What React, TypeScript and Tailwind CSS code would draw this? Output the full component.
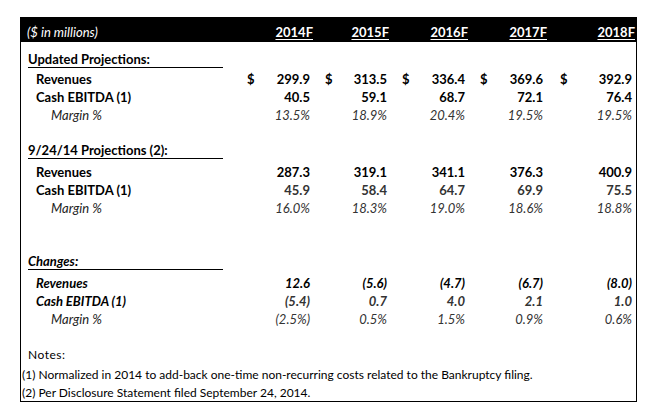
import React from 'react';

type Row = {
  label: string;
  values: string[];
  dollar?: boolean;
  kind: 'main' | 'margin';
  tone?: string;
};

const cols = ['2014F', '2015F', '2016F', '2017F', '2018F'];

// column widths and $ offsets, measured off the sheet
const colW = ['w-[69px]', 'w-[78px]', 'w-[78px]', 'w-[78px]', 'w-[89px]'];
const dollarPad = ['pl-[3px]', 'pl-[12px]', 'pl-[11px]', 'pl-[11px]', 'pl-[13px]'];
const valPad = ['pr-[3px]', 'pr-[4px]', 'pr-[4px]', 'pr-[4px]', 'pr-[4px]'];
const headPad = ['pr-[0px]', 'pr-[2px]', 'pr-[1px]', 'pr-[0px]', 'pr-[1px]'];

function DataRow({ row, italic }: { row: Row; italic?: boolean }) {
  const isMargin = row.kind === 'margin';
  return (
    <div className="flex h-[18px] items-center leading-[18px]">
      <div
        className={
          'w-[223px] ' +
          (isMargin ? 'pl-[30px] italic font-normal text-[#222]' : 'pl-[15px] font-bold') +
          (italic && !isMargin ? ' italic' : '')
        }
      >
        {row.label}
      </div>
      {row.values.map((v, i) => (
        <div key={i} className={'flex justify-between ' + colW[i] + ' ' + dollarPad[i] + ' ' + valPad[i]}>
          <span className="font-bold">{row.dollar ? '$' : ''}</span>
          <span
            className={
              isMargin
                ? 'italic text-[#333]'
                : 'font-bold ' + (italic ? 'italic ' : '') + (row.tone ?? 'text-black')
            }
          >
            {v}
          </span>
        </div>
      ))}
    </div>
  );
}

function Title({ text, italic }: { text: string; italic?: boolean }) {
  return (
    <div className="flex h-[17px]">
      <div className={'ml-[7px] w-[195px] border-b border-black font-bold leading-[16px] ' + (italic ? 'italic' : '')}>
        {text}
      </div>
    </div>
  );
}

export default function App() {
  const updated: Row[] = [
    { label: 'Revenues', values: ['299.9', '313.5', '336.4', '369.6', '392.9'], dollar: true, kind: 'main' },
    { label: 'Cash EBITDA (1)', values: ['40.5', '59.1', '68.7', '72.1', '76.4'], kind: 'main' },
    { label: 'Margin %', values: ['13.5%', '18.9%', '20.4%', '19.5%', '19.5%'], kind: 'margin' },
  ];
  const prior: Row[] = [
    { label: 'Revenues', values: ['287.3', '319.1', '341.1', '376.3', '400.9'], kind: 'main' },
    { label: 'Cash EBITDA (1)', values: ['45.9', '58.4', '64.7', '69.9', '75.5'], kind: 'main', tone: 'text-[#333]' },
    { label: 'Margin %', values: ['16.0%', '18.3%', '19.0%', '18.6%', '18.8%'], kind: 'margin' },
  ];
  const changes: Row[] = [
    { label: 'Revenues', values: ['12.6', '(5.6)', '(4.7)', '(6.7)', '(8.0)'], kind: 'main' },
    { label: 'Cash EBITDA (1)', values: ['(5.4)', '0.7', '4.0', '2.1', '1.0'], kind: 'main', tone: 'text-[#333]' },
    { label: 'Margin %', values: ['(2.5%)', '0.5%', '1.5%', '0.9%', '0.6%'], kind: 'margin' },
  ];

  return (
    <div className="h-[419px] w-[661px] bg-white pt-[17px] text-[13px] text-black" style={{ fontFamily: 'Lato, "Open Sans", sans-serif' }}>
      <div className="ml-[20px] w-[617px] border-b border-r border-l border-black">
        {/* header bar */}
        <div className="flex h-[25px] items-end bg-black pb-[1px] leading-[18px] text-white">
          <div className="w-[223px] pl-[6px] italic">($ in millions)</div>
          {cols.map((c, i) => (
            <div key={c} className={'text-right font-bold ' + colW[i] + ' ' + headPad[i]}>
              <span className="underline underline-offset-2">{c}</span>
            </div>
          ))}
        </div>

        <div className="h-[9px]" />
        <Title text="Updated Projections:" />
        <div className="h-[2px]" />
        {updated.map((r) => (
          <DataRow key={r.label} row={r} />
        ))}

        <div className="h-[18px]" />
        <Title text="9/24/14 Projections (2):" />
        <div className="h-[4px]" />
        {prior.map((r) => (
          <DataRow key={r.label} row={r} />
        ))}

        <div className="h-[36px]" />
        <Title text="Changes:" italic />
        <div className="h-[4px]" />
        {changes.map((r) => (
          <DataRow key={r.label} row={r} italic />
        ))}

        <div className="h-[18px]" />
        <div className="h-[18px] pl-[7px] text-[12px] leading-[18px] tracking-[0.5px]">Notes:</div>
        <div className="h-[2px]" />
        <div className="h-[18px] pl-[1px] text-[12px] leading-[18px]">
          (1) Normalized in 2014 to add-back one-time non-recurring costs related to the Bankruptcy filing.
        </div>
        <div className="h-[17px] pl-[1px] text-[12px] leading-[17px]">
          (2) Per Disclosure Statement filed September 24, 2014.
        </div>
      </div>
    </div>
  );
}
